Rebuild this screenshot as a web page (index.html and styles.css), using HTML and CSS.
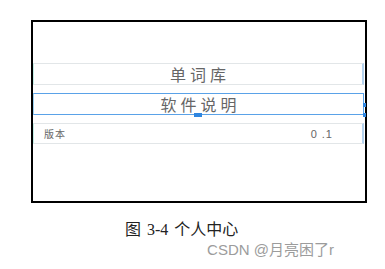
FILE: index.html
```html
<!DOCTYPE html>
<html lang="zh">
<head>
    <meta charset="UTF-8">
    <title>个人中心</title>
    <link rel="stylesheet" href="styles.css">
</head>
<body>
    <div class="frame">
        <div class="item center">单词库</div>
        <div class="item center selected">
            软件说明
            <span class="handle handle-bottom"></span>
            <span class="handle handle-right"></span>
            <span class="handle handle-corner"></span>
        </div>
        <div class="item split">
            <span class="label">版本</span>
            <span class="value">0 .1</span>
        </div>
    </div>

    <div class="caption">图 3-4 个人中心</div>
    <div class="watermark">CSDN @月亮困了r</div>
    <div class="next-line">显示单词的基本信息与使用说明，点击后进入对应页面</div>
</body>
</html>
```

FILE: styles.css
```css
html, body {
    margin: 0;
    padding: 0;
    background: #fff;
    overflow: hidden;
}

.frame {
    box-sizing: border-box;
    width: 336px;
    height: 183px;
    margin: 20px 0 0 31px;
    padding: 41px 1px 0 0;
    border: 2px solid #000;
    display: flex;
    flex-direction: column;
    gap: 8px;
}

.item {
    position: relative;
    box-sizing: border-box;
    height: 22px;
    border: 1px solid #e2e6e8;
    border-left: 1px solid #c4efe6;
    border-right: 2px solid #b4d2ee;
    font-family: "Noto Sans CJK SC", sans-serif;
    color: #555;
    display: flex;
    align-items: center;
}

.center {
    justify-content: center;
    font-size: 16px;
    letter-spacing: 4px;
    padding-left: 4px;
    color: #666;
}

.item.selected {
    border: 1px solid #5aa2e8;
    border-left: 1px solid #9ed2f0;
}

.split {
    height: 21px;
    justify-content: space-between;
    font-size: 10px;
    padding: 0 29px 0 10px;
    color: #666;
}

.label {
    letter-spacing: 1px;
}

.value {
    font-family: "Liberation Sans", sans-serif;
    font-size: 11px;
    letter-spacing: 1px;
}

.handle {
    position: absolute;
    background: #2f86e0;
}

.handle-bottom {
    width: 8px;
    height: 4px;
    left: 160px;
    bottom: -3px;
}

.handle-right {
    width: 3px;
    height: 4px;
    right: -3px;
    top: 9px;
}

.handle-corner {
    width: 3px;
    height: 4px;
    right: -3px;
    bottom: -3px;
}

.caption {
    margin: 17px 0 0 125px;
    font-family: "Liberation Serif", "Noto Sans CJK SC", serif;
    font-size: 16px;
    line-height: 20px;
    word-spacing: 2px;
    color: #222;
}

.watermark {
    width: 334px;
    text-align: right;
    font-family: "Liberation Sans", "Noto Sans CJK SC", sans-serif;
    font-size: 15px;
    line-height: 20px;
    color: #9c9c9c;
}

.next-line {
    margin-top: 8px;
    white-space: nowrap;
    font-family: "Noto Sans CJK SC", sans-serif;
    font-size: 16px;
    line-height: 20px;
    color: #333;
}
```
